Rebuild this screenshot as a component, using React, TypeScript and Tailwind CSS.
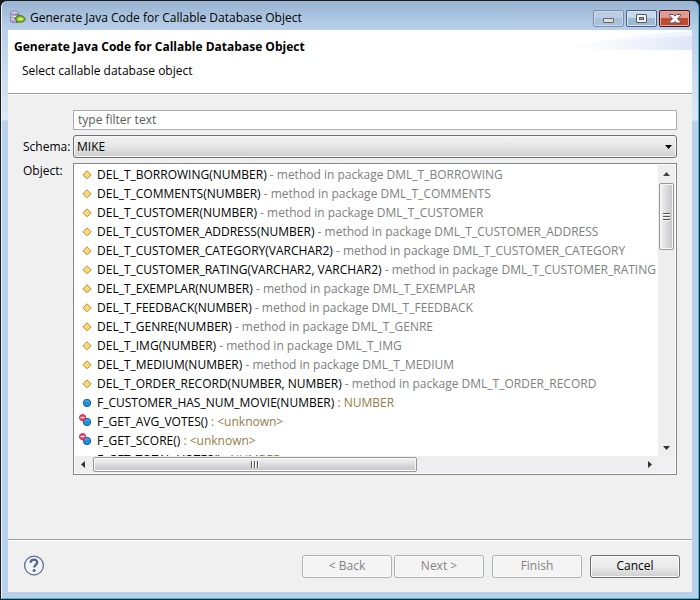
import React from "react";

type Kind = "method" | "function" | "invalid";
type Entry = { kind: Kind; name: string; detail: string };

const method = (name: string, pkg: string): Entry => ({
  kind: "method",
  name,
  detail: ` - method in package ${pkg}`,
});

const entries: Entry[] = [
  method("DEL_T_BORROWING(NUMBER)", "DML_T_BORROWING"),
  method("DEL_T_COMMENTS(NUMBER)", "DML_T_COMMENTS"),
  method("DEL_T_CUSTOMER(NUMBER)", "DML_T_CUSTOMER"),
  method("DEL_T_CUSTOMER_ADDRESS(NUMBER)", "DML_T_CUSTOMER_ADDRESS"),
  method("DEL_T_CUSTOMER_CATEGORY(VARCHAR2)", "DML_T_CUSTOMER_CATEGORY"),
  method("DEL_T_CUSTOMER_RATING(VARCHAR2, VARCHAR2)", "DML_T_CUSTOMER_RATING"),
  method("DEL_T_EXEMPLAR(NUMBER)", "DML_T_EXEMPLAR"),
  method("DEL_T_FEEDBACK(NUMBER)", "DML_T_FEEDBACK"),
  method("DEL_T_GENRE(NUMBER)", "DML_T_GENRE"),
  method("DEL_T_IMG(NUMBER)", "DML_T_IMG"),
  method("DEL_T_MEDIUM(NUMBER)", "DML_T_MEDIUM"),
  method("DEL_T_ORDER_RECORD(NUMBER, NUMBER)", "DML_T_ORDER_RECORD"),
  { kind: "function", name: "F_CUSTOMER_HAS_NUM_MOVIE(NUMBER)", detail: " : NUMBER" },
  { kind: "invalid", name: "F_GET_AVG_VOTES()", detail: " : <unknown>" },
  { kind: "invalid", name: "F_GET_SCORE()", detail: " : <unknown>" },
  { kind: "function", name: "F_GET_TOTAL_VOTES()", detail: " : NUMBER" },
];

function EntryIcon({ kind }: { kind: Kind }) {
  return (
    <svg width="16" height="16" viewBox="0 0 16 16" className="shrink-0" aria-hidden="true">
      {kind === "method" ? (
        <path d="M8 3.8 L12 7.8 L8 11.8 L4 7.8 Z" fill="#fbd977" stroke="#bd8a2c" strokeLinejoin="round" />
      ) : (
        <>
          <circle cx="8" cy="8" r="3.7" fill="#2490d4" stroke="#17659f" />
          <path d="M5.8 7 a2.6 2.6 0 0 1 4.4 0" fill="none" stroke="#58b4e8" />
        </>
      )}
      {kind === "invalid" && (
        <>
          <circle cx="3.6" cy="3.6" r="3.1" fill="#ea3c62" stroke="#d8254e" />
          <path d="M1.6 3.5 H5.6" stroke="#fff" strokeWidth="1.4" />
        </>
      )}
    </svg>
  );
}

function AppIcon() {
  return (
    <svg width="16" height="16" viewBox="0 0 16 16" className="shrink-0" aria-hidden="true">
      <path d="M0.5 2.5 V11 C0.5 13 8 13 8 11 V2.5Z" fill="#a9a0cb" stroke="#8880ad" />
      <ellipse cx="4.3" cy="2.6" rx="3.8" ry="1.6" fill="#d6d0e6" stroke="#8e84b4" />
      <path d="M0.8 5.6 C2 7 7 7 8 5.6 M0.8 8.6 C2 10 7 10 8 8.6" fill="none" stroke="#ece8f5" />
      <path d="M5 9 C6 6 9 5 11.5 5.8 C14 6.5 15.5 8 15.2 9.5 C14.5 12 11 12.7 8.5 12 L6.5 12.6 L6.5 10.5 Z" fill="#7fb52c" stroke="#3d7a22" />
      <ellipse cx="10.5" cy="9" rx="2.7" ry="1.5" fill="#e6ec62" />
      <path d="M6.5 6.5 L8 4.4 L10.5 5.8" fill="#5e9a28" stroke="#3d7a22" strokeWidth=".7" />
    </svg>
  );
}

function WindowControls() {
  return (
    <div className="flex gap-[2px]">
      <button type="button" aria-label="Minimize" className="flex h-[17px] w-[31px] items-center justify-center rounded-[2px] border border-[#7991b0] bg-linear-to-b from-[#bacde2] from-50% to-[#a9c1da] to-50% shadow-[inset_0_0_0_1px_#c9daeb]">
        <svg width="12" height="12" viewBox="0 0 12 12" aria-hidden="true">
          <rect x=".5" y="5.5" width="10" height="4" rx=".5" fill="#dedede" stroke="#686868" />
        </svg>
      </button>
      <button type="button" aria-label="Maximize" className="flex h-[17px] w-[31px] items-center justify-center rounded-[2px] border border-[#4d607f] bg-linear-to-b from-[#c6d8eb] from-50% to-[#9db9d6] to-50% shadow-[inset_0_0_0_1px_#d6e4f3]">
        <svg width="12" height="10" viewBox="0 0 12 10" aria-hidden="true">
          <rect x=".5" y=".5" width="10" height="8" rx=".5" fill="#f5f5f5" stroke="#535666" />
          <rect x="3.5" y="3.5" width="4" height="2" fill="#8faac8" stroke="#535666" />
        </svg>
      </button>
      <button type="button" aria-label="Close" className="flex h-[17px] w-[31px] items-center justify-center rounded-[2px] border border-[#4b1019] bg-linear-to-b from-[#df9b90] from-50% to-[#c0492f] to-50% shadow-[inset_0_0_0_1px_#e5a79e]">
        <svg width="12" height="10" viewBox="0 0 12 10" aria-hidden="true">
          <path d="M0.5 .5 H4.5 L6 2 L7.5 .5 H11.5 V1.8 L8.5 4.8 L11.5 7.7 V9 H7.5 L6 7.5 L4.5 9 H.5 V7.7 L3.5 4.8 L.5 1.8 Z" fill="#f7f7f7" stroke="#565263" />
        </svg>
      </button>
    </div>
  );
}

function WizardButton({ children, disabled = false }: { children: React.ReactNode; disabled?: boolean }) {
  return (
    <button
      type="button"
      disabled={disabled}
      className="h-[23px] w-[90px] rounded-[3px] border border-[#707070] bg-linear-to-b from-[#f2f2f2] via-[#ebebeb] via-50% to-[#cfcfcf] shadow-[inset_0_0_0_1px_#fafafa] disabled:border-[#adb2b5] disabled:bg-[#f4f4f4] disabled:bg-none disabled:text-[#838383]"
    >
      {children}
    </button>
  );
}

export default function App() {
  return (
    <div className="h-screen bg-[#1b1b22] p-px font-['Open_Sans','Noto_Sans',sans-serif] text-[12px] leading-4 text-black">
      <div className="flex h-full flex-col rounded-t-[6px] border-r border-b border-l border-l-[#eef4fb] border-r-[#25c3ea] border-b-[#25c3ea] bg-[linear-gradient(to_bottom,#99b4d1_0px,#b9d1ea_29px,#dce8f6_119px,#b9d1ea_120px)] px-[6px] pb-[6px]">
        <header className="flex h-[29px] shrink-0 items-start justify-between pl-[2px]">
          <div className="flex items-center gap-1 pt-[9px]">
            <AppIcon />
            <span>Generate Java Code for Callable Database Object</span>
          </div>
          <div className="pt-[9px] pr-[2px]">
            <WindowControls />
          </div>
        </header>

        <main className="flex min-h-0 flex-1 flex-col bg-[#f0f0f0]">
          <section className="relative h-[64px] shrink-0 border-b border-[#a0a0a0] bg-white pt-[9px] pl-[6px]">
            <svg className="absolute top-0 right-0" width="140" height="20" viewBox="0 0 140 20" aria-hidden="true">
              <defs>
                <linearGradient id="sweep">
                  <stop offset="0" stopColor="#fff" />
                  <stop offset="1" stopColor="#dfe6f7" />
                </linearGradient>
              </defs>
              <path d="M0 20 C50 10 90 4 140 1 V20 Z" fill="url(#sweep)" opacity=".5" />
              <path d="M50 14 C80 9 110 7 140 6 V20 H30 Z" fill="url(#sweep)" />
            </svg>
            <h1 className="relative font-bold">Generate Java Code for Callable Database Object</h1>
            <p className="relative mt-2 pl-2">Select callable database object</p>
          </section>

          <form className="grid min-h-0 flex-1 grid-cols-[50px_1fr] grid-rows-[20px_23px_minmax(0,1fr)] gap-y-[5px] border-t border-white pt-[15px] pr-[15px] pb-[64px] pl-[15px]">
            <input
              type="text"
              aria-label="Filter"
              placeholder="type filter text"
              className="col-start-2 border border-[#abadb3] bg-white px-1 placeholder:text-[#5a5a5a]"
            />
            <label htmlFor="schema" className="self-center">Schema:</label>
            <div className="relative grid">
              <select
                id="schema"
                className="appearance-none rounded-[3px] border border-[#707070] bg-linear-to-b from-[#f2f2f2] via-[#e6e6e6] via-50% to-[#cfcfcf] pl-[3px] shadow-[inset_0_0_0_1px_#f7f7f7]"
              >
                <option>MIKE</option>
              </select>
              <svg className="pointer-events-none absolute top-[10px] right-[5px]" width="7" height="4" viewBox="0 0 7 4" aria-hidden="true">
                <path d="M0 0 H7 L3.5 4 Z" />
              </svg>
            </div>
            <span id="object-label">Object:</span>
            <div className="grid min-h-0 grid-cols-[minmax(0,1fr)_17px] grid-rows-[minmax(0,1fr)_17px] border border-[#828790] bg-white p-px">
              <ul aria-labelledby="object-label" className="overflow-hidden">
                {entries.map((e) => (
                  <li key={e.name} className="flex h-[19px] items-center gap-[2px] pl-1 whitespace-pre">
                    <EntryIcon kind={e.kind} />
                    <span>
                      {e.name}
                      <span className={e.kind === "method" ? "text-[#808080]" : "text-[#957d47]"}>{e.detail}</span>
                    </span>
                  </li>
                ))}
              </ul>
              <div className="flex flex-col items-center bg-[#eeeeee]">
                <svg width="17" height="18" viewBox="0 0 17 18" aria-hidden="true">
                  <path d="M5 11 H12 L8.5 7 Z" fill="#444" />
                </svg>
                <div className="flex h-[67px] w-[15px] flex-col items-center justify-center gap-px rounded-[2px] border border-[#979797] bg-linear-to-r from-[#f4f4f4] to-[#c4c4c8] shadow-[inset_0_0_0_1px_#fafafa]">
                  <span className="h-[2px] w-[7px] border-t border-[#555] bg-white" />
                  <span className="h-[2px] w-[7px] border-t border-[#555] bg-white" />
                  <span className="h-[2px] w-[7px] border-t border-[#555] bg-white" />
                </div>
                <svg className="mt-auto" width="17" height="17" viewBox="0 0 17 17" aria-hidden="true">
                  <path d="M5 7 H12 L8.5 11 Z" fill="#333" />
                </svg>
              </div>
              <div className="flex items-center bg-[#eeeeee]">
                <svg width="18" height="17" viewBox="0 0 18 17" aria-hidden="true">
                  <path d="M10 5 V12 L6 8.5 Z" fill="#333" />
                </svg>
                <div className="flex h-[15px] w-[55.5%] items-center justify-center gap-px rounded-[2px] border border-[#979797] bg-linear-to-b from-[#f4f4f4] to-[#c4c4c8] shadow-[inset_0_0_0_1px_#fafafa]">
                  <span className="h-[7px] w-[2px] border-l border-[#555] bg-white" />
                  <span className="h-[7px] w-[2px] border-l border-[#555] bg-white" />
                  <span className="h-[7px] w-[2px] border-l border-[#555] bg-white" />
                </div>
                <svg className="ml-auto" width="17" height="17" viewBox="0 0 17 17" aria-hidden="true">
                  <path d="M7 5 V12 L11 8.5 Z" fill="#333" />
                </svg>
              </div>
              <div className="bg-[#f0f0f0]" />
            </div>
          </form>

          <footer className="flex h-[53px] shrink-0 items-center border-t border-[#a0a0a0] pr-3 pl-[15px] shadow-[inset_0_1px_0_#fff]">
            <button type="button" aria-label="Help">
              <svg width="22" height="22" viewBox="0 0 22 22" aria-hidden="true">
                <circle cx="11" cy="10.5" r="9.4" fill="#f3f5f8" stroke="#5b6f8f" strokeWidth="1.3" />
                <path d="M7.6 7.8 C7.8 3.5 14.4 3.7 14.2 7.5 C14.1 9.9 11.2 9.9 11.2 12.5" fill="none" stroke="#53678a" strokeWidth="2.4" />
                <circle cx="11.1" cy="15.5" r="1.5" fill="#53678a" />
              </svg>
            </button>
            <div className="ml-auto flex gap-2">
              <div className="flex gap-[2px]">
                <WizardButton disabled>&lt; Back</WizardButton>
                <WizardButton disabled>Next &gt;</WizardButton>
              </div>
              <WizardButton disabled>Finish</WizardButton>
              <WizardButton>Cancel</WizardButton>
            </div>
          </footer>
        </main>
      </div>
    </div>
  );
}
